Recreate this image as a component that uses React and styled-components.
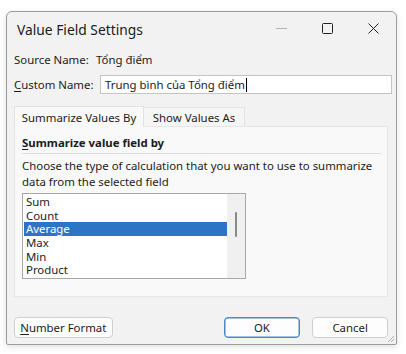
import React from "react";
import styled, { createGlobalStyle } from "styled-components";

const Global = createGlobalStyle`
  html, body {
    margin: 0;
    background: #ffffff;
  }
  body {
    font-family: "Noto Sans", "Open Sans", sans-serif;
    color: #1b1b1b;
    white-space: nowrap;
  }
`;

const Page = styled.div`
  width: 406px;
  height: 354px;
  padding: 11px 0 0 6px;
  box-sizing: border-box;
`;

const Window = styled.div`
  width: 391px;
  height: 334px;
  box-sizing: border-box;
  border: 1px solid #9c9c9c;
  border-radius: 6px 6px 2px 2px;
  background: #f2f2f2;
  display: flex;
  flex-direction: column;
  position: relative;
  box-shadow: 0 2px 6px rgba(0, 0, 0, 0.12);
`;

const TitleBar = styled.div`
  height: 33px;
  display: flex;
  align-items: center;
  padding-left: 10px;
`;

const Title = styled.div`
  flex: 1;
  font-size: 13.8px;
  color: #1a1a1a;
  padding-top: 1px;
`;

const CaptionButton = styled.div`
  width: 46px;
  height: 33px;
  display: flex;
  align-items: center;
  justify-content: center;
  color: ${(p) => (p.$disabled ? "#b5b5b5" : "#222")};
`;

const Body = styled.div`
  flex: 1;
  display: flex;
  flex-direction: column;
  padding: 0 8px 0 7px;
  font-size: 11.4px;
`;

const FieldRow = styled.div`
  display: flex;
  align-items: center;
  height: ${(p) => p.$h}px;
  margin-top: ${(p) => p.$mt}px;
`;

const Label = styled.span`
  width: ${(p) => p.$w}px;
  flex: none;
`;

const U = styled.span`
  text-decoration: underline;
  text-underline-offset: 2px;
`;

const NameInput = styled.div`
  flex: 1;
  height: 19px;
  margin-right: -4px;
  box-sizing: border-box;
  border: 1px solid #c4c4c4;
  background: #ffffff;
  display: flex;
  align-items: center;
  padding-left: 4px;
`;

const Caret = styled.span`
  display: inline-block;
  width: 1px;
  height: 14px;
  background: #000;
  margin-left: 1px;
`;

const Tabs = styled.div`
  display: flex;
  align-items: flex-end;
  margin-top: 12px;
  height: 20px;
`;

const Tab = styled.div`
  width: ${(p) => p.$w}px;
  height: ${(p) => (p.$active ? 21 : 19)}px;
  margin-bottom: ${(p) => (p.$active ? -1 : 0)}px;
  box-sizing: border-box;
  display: flex;
  align-items: center;
  justify-content: center;
  background: ${(p) => (p.$active ? "#f9f9f9" : "#f5f5f5")};
  border: 1px solid #e2e2e2;
  border-bottom: none;
  ${(p) => (p.$active ? "" : "border-left: none;")}
  position: relative;
  z-index: 1;
`;

const Panel = styled.div`
  height: 171px;
  box-sizing: border-box;
  background: #f9f9f9;
  border: 1px solid #e6e6e6;
  padding: 0 6px 0 7px;
  display: flex;
  flex-direction: column;
`;

const Heading = styled.div`
  font-weight: 700;
  margin-top: 7px;
  height: 17px;
  line-height: 17px;
  padding-bottom: 2px;
  border-bottom: 1px solid #dcdcdc;
`;

const Hint = styled.div`
  margin-top: 4px;
  line-height: 16px;
`;

const ListBox = styled.div`
  margin-top: 3px;
  width: 224px;
  height: 86px;
  box-sizing: border-box;
  border: 1px solid #a8a8a8;
  background: #ffffff;
  display: flex;
`;

const Items = styled.div`
  flex: 1;
  padding: 1px 0 0 1px;
`;

const Item = styled.div`
  height: 13.7px;
  line-height: 13.7px;
  padding-left: 2px;
  background: ${(p) => (p.$selected ? "#2e74c4" : "transparent")};
  color: ${(p) => (p.$selected ? "#ffffff" : "#1b1b1b")};
`;

const ScrollTrack = styled.div`
  width: 18px;
  background: #f0f0f0;
  display: flex;
  justify-content: center;
  padding-top: 18px;
`;

const Thumb = styled.div`
  width: 2px;
  height: 25px;
  border-radius: 1px;
  background: #8a8a8a;
`;

const ButtonRow = styled.div`
  display: flex;
  margin-top: 20px;
  height: 21px;
`;

const Button = styled.div`
  width: ${(p) => p.$w}px;
  margin-left: ${(p) => p.$ml || 0}px;
  height: 21px;
  box-sizing: border-box;
  border: 1px solid ${(p) => (p.$primary ? "#4a86c8" : "#cfcfcf")};
  border-radius: 4px;
  background: #fdfdfd;
  display: flex;
  align-items: center;
  justify-content: center;
  ${(p) => (p.$primary ? "box-shadow: inset 0 0 0 0.5px #4a86c8;" : "")}
`;

const Grip = styled.svg`
  position: absolute;
  right: 1px;
  bottom: 1px;
`;

const items = ["Sum", "Count", "Average", "Max", "Min", "Product"];

export default function App() {
  return (
    <Page>
      <Global />
      <Window>
        <TitleBar>
          <Title>Value Field Settings</Title>
          <CaptionButton $disabled>
            <svg width="11" height="2" viewBox="0 0 11 2">
              <rect x="0" y="0" width="11" height="1" fill="currentColor" />
            </svg>
          </CaptionButton>
          <CaptionButton>
            <svg width="11" height="11" viewBox="0 0 11 11">
              <rect x="0.5" y="0.5" width="10" height="10" rx="1" fill="none" stroke="currentColor" />
            </svg>
          </CaptionButton>
          <CaptionButton>
            <svg width="11" height="11" viewBox="0 0 11 11">
              <path d="M0.5 0.5 L10.5 10.5 M10.5 0.5 L0.5 10.5" stroke="currentColor" strokeWidth="1" />
            </svg>
          </CaptionButton>
        </TitleBar>
        <Body>
          <FieldRow $h={18} $mt={5}>
            <Label $w={82}>Source Name:</Label>
            <span>Tổng điểm</span>
          </FieldRow>
          <FieldRow $h={19} $mt={7}>
            <Label $w={86}>
              <U>C</U>ustom Name:
            </Label>
            <NameInput>
              Trung bình của Tổng điểm
              <Caret />
            </NameInput>
          </FieldRow>
          <Tabs>
            <Tab $active $w={130}>Summarize Values By</Tab>
            <Tab $w={101}>Show Values As</Tab>
          </Tabs>
          <Panel>
            <Heading>
              <U>S</U>ummarize value field by
            </Heading>
            <Hint>
              Choose the type of calculation that you want to use to summarize
              <br />
              data from the selected field
            </Hint>
            <ListBox>
              <Items>
                {items.map((it) => (
                  <Item key={it} $selected={it === "Average"}>
                    {it}
                  </Item>
                ))}
              </Items>
              <ScrollTrack>
                <Thumb />
              </ScrollTrack>
            </ListBox>
          </Panel>
          <ButtonRow>
            <Button $w={99}>
              <U>N</U>umber Format
            </Button>
            <Button $w={77} $ml={111} $primary>OK</Button>
            <Button $w={76} $ml={12}>Cancel</Button>
          </ButtonRow>
        </Body>
        <Grip width="10" height="10" viewBox="0 0 10 10">
          <path d="M9 3 L3 9 M9 6 L6 9" stroke="#b0b0b0" strokeWidth="1" />
        </Grip>
      </Window>
    </Page>
  );
}
